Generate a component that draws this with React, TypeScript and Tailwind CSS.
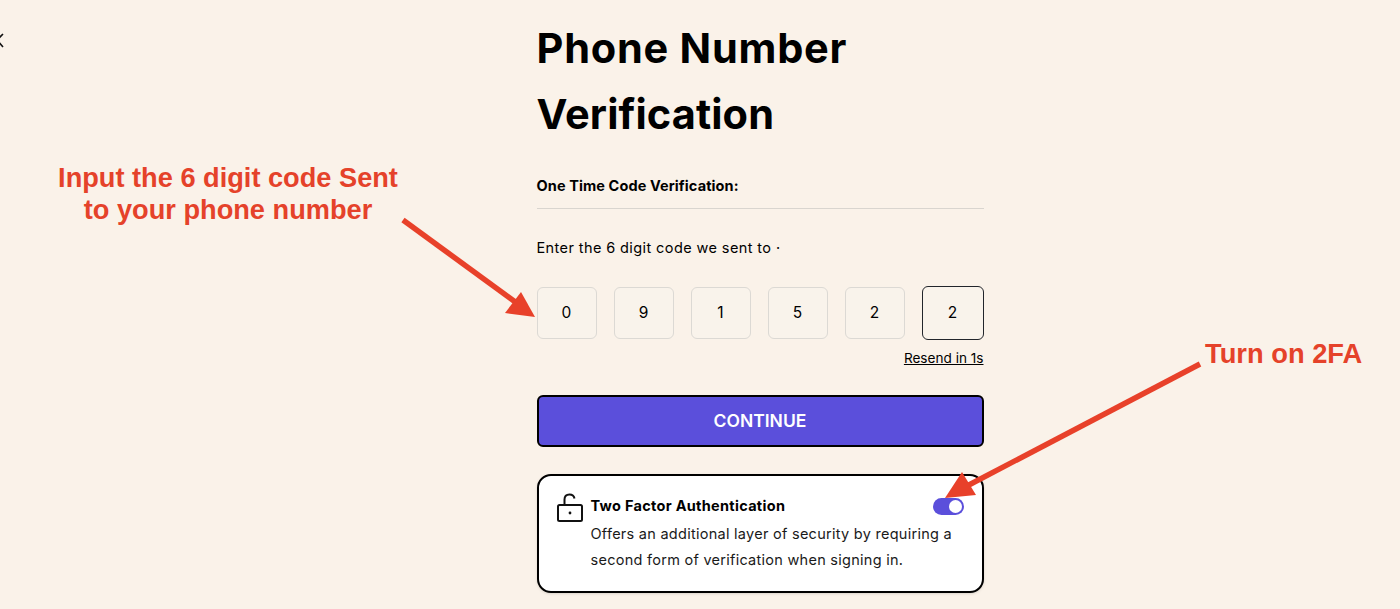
import React from "react";

const digits = ["0", "9", "1", "5", "2"];

export default function App() {
  return (
    <div className="relative h-[609px] w-[1400px] overflow-hidden bg-[#faf2e9] font-['Inter',sans-serif] text-black">
      <svg className="absolute left-0 top-0" width="1400" height="609" viewBox="0 0 1400 609" fill="none">
        <path d="M3 34 L-3 40 L3 47" stroke="#111" strokeWidth="1.6" />
      </svg>

      <div className="ml-[536.5px] flex w-[447px] flex-col">
        <h1 className="mt-[15px] text-[41.5px] font-bold leading-[66px]">
          <span className="tracking-[0.75px]">Phone Number</span>
          <br />
          <span className="tracking-[0.1px]">Verification</span>
        </h1>
        <div className="mt-[29px] border-b border-[#d9d5cf] pb-[12px] text-[14.5px] font-bold leading-[20px] tracking-[0.1px]">
          One Time Code Verification:
        </div>
        <p className="mt-[29px] text-[14.5px] leading-[20px] tracking-[0.4px]">Enter the 6 digit code we sent to ·</p>

        <div className="mt-[28px] flex items-center justify-between">
          {digits.map((d, i) => (
            <div
              key={i}
              className="flex h-[52px] w-[60px] items-center justify-center rounded-[6px] border-[1.5px] border-[#dcd9d4] bg-[#f9f3eb] text-[15.5px]"
            >
              {d}
            </div>
          ))}
          <div className="flex h-[54px] w-[62px] items-center justify-center rounded-[6px] border-[1.5px] border-[#22252b] bg-[#f9f3eb] text-[15.5px]">
            2
          </div>
        </div>

        <div className="mt-[10px] flex justify-end">
          <span className="text-[13.6px] leading-[16px] underline">Resend in 1s</span>
        </div>

        <button className="mt-[29px] flex h-[52px] w-full items-center justify-center rounded-[6px] border-2 border-black bg-[#5b4fdb] text-[17.5px] font-semibold text-white">
          CONTINUE
        </button>

        <div className="mt-[27px] flex h-[119px] w-full gap-[7px] rounded-[14px] border-2 border-black bg-white pl-[17px] pr-[18px] pt-[20px] shadow-sm">
          <svg className="mt-[-3px] shrink-0" width="28" height="30" viewBox="0 0 28 30" fill="none" stroke="#111" strokeWidth="2">
            <rect x="2" y="12" width="24" height="16" rx="1.5" />
            <path d="M8.5 12 V6.5 C8.5 3.5 10.5 1.5 13.5 1.5 C16 1.5 18 3 18.5 5.5" />
            <circle cx="14" cy="20" r="1.4" fill="#111" stroke="none" />
          </svg>
          <div className="min-w-0 flex-1">
            <div className="flex items-center justify-between">
              <span className="text-[14.5px] font-bold leading-[20px] tracking-[0.3px]">Two Factor Authentication</span>
              <span className="flex h-[17px] w-[31px] items-center justify-end rounded-full bg-[#5b4fdb] pr-[2px]">
                <span className="h-[13px] w-[13px] rounded-full bg-white" />
              </span>
            </div>
            <p className="mt-[5px] text-[14.5px] leading-[26px] tracking-[0.27px] text-[#1a1a1a]">
              Offers an additional layer of security by requiring a second form of verification when signing in.
            </p>
          </div>
        </div>
      </div>

      <div className="absolute left-[28px] top-[162px] w-[400px] text-center font-['Liberation_Sans',sans-serif] text-[27.2px] font-bold leading-[32px] text-[#e5422a]">
        Input the 6 digit code Sent
        <br />
        to your phone number
      </div>
      <div className="absolute left-[1205px] top-[337px] font-['Liberation_Sans',sans-serif] text-[27.3px] font-bold leading-[33px] text-[#e5422a]">
        Turn on 2FA
      </div>

      <svg className="absolute left-0 top-0" width="1400" height="609" viewBox="0 0 1400 609" fill="none">
        <path d="M403 220 L518 304" stroke="#e8412a" strokeWidth="5.5" />
        <path d="M535 317 L505 313 L521 292 Z" fill="#e8412a" />
        <path d="M1200 364 L965 487" stroke="#e8412a" strokeWidth="5.5" />
        <path d="M945 498 L962 472 L976 495 Z" fill="#e8412a" />
      </svg>
    </div>
  );
}
